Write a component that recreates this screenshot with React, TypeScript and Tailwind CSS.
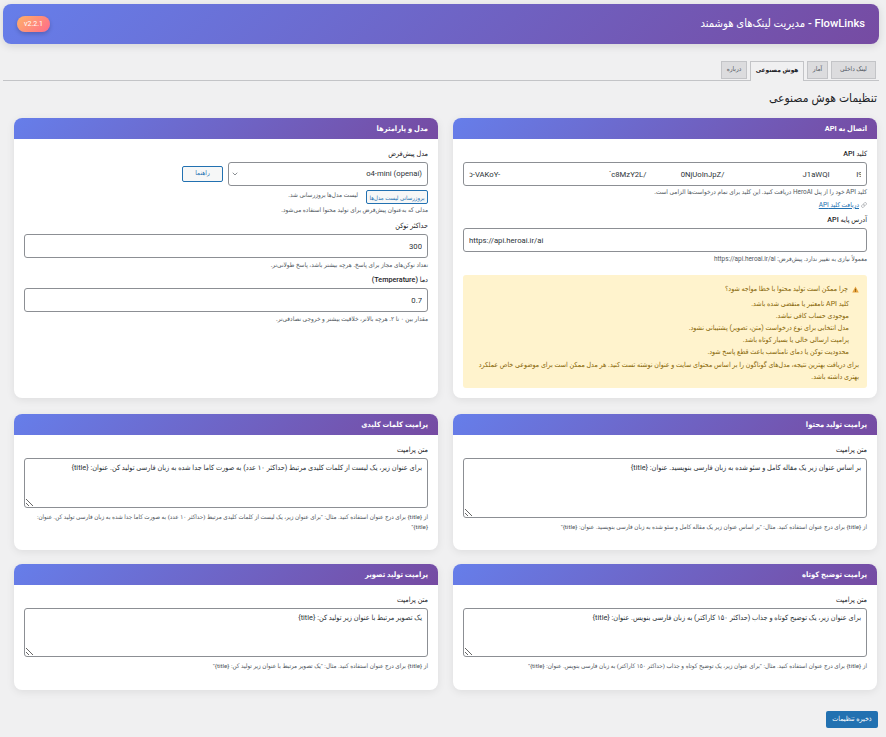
import React from 'react'
import { ChevronDown, Link } from 'lucide-react'

function Card({ title, children }: { title: string; children: React.ReactNode }) {
  return (
    <div className="bg-white rounded-lg shadow-[0_2px_8px_rgba(0,0,0,0.08)] overflow-hidden">
      <div className="h-[21px] flex items-center px-[10px] bg-[linear-gradient(135deg,#667eea,#764ba2)] text-white text-[7.5px] font-bold">{title}</div>
      <div className="px-[10px] pt-[10px] pb-[10px]">{children}</div>
    </div>
  )
}

function Label({ children }: { children: React.ReactNode }) {
  return <div className="text-[7.2px] leading-[12px] font-medium text-[#1d2327] mb-[1px] -translate-y-px">{children}</div>
}

function Help({ children, className = '' }: { children: React.ReactNode; className?: string }) {
  return <p className={'text-[6.4px] leading-[10px] text-[#50575e] ' + className}>{children}</p>
}

const inputCls = 'block w-full h-6 px-[5px] border border-[#8c8f94] rounded-[3px] bg-white text-[7.7px] text-[#2c3338] outline-none'
const tabCls = 'h-[18px] border border-[#c3c4c7] bg-[#dcdcde] text-[6.5px] text-[#50575e] flex items-center justify-center'

function PromptCard({ title, value, help, h, mb }: { title: string; value: string; help: string; h: string; mb: string }) {
  return (
    <Card title={title}>
      <Label>متن پرامپت</Label>
      <textarea readOnly value={value} className={'block w-full px-[5px] py-[3px] border border-[#8c8f94] rounded-[3px] bg-white text-[7.3px] leading-[12px] text-[#2c3338] outline-none ' + h} />
      <p className={'mt-[4px] text-[6.25px] leading-[10px] text-[#50575e] ' + mb}>{help}</p>
    </Card>
  )
}

export default function App() {
  return (
    <div dir="rtl" className="min-h-screen bg-[#f0f0f1] pt-1 font-['Roboto','DejaVu_Sans_Condensed','DejaVu_Sans',sans-serif]">
      <div className="ml-[3px] mr-[7px] h-10 rounded-lg bg-[linear-gradient(135deg,#667eea,#764ba2)] shadow-[0_2px_8px_rgba(0,0,0,0.12)] flex items-center justify-between px-[14px]">
        <h1 className="text-[11.2px] font-medium text-white">FlowLinks - مدیریت لینک‌های هوشمند</h1>
        <span className="h-4 w-[33px] rounded-full bg-[linear-gradient(135deg,#feb168,#ff6b8a)] text-white text-[7px] flex items-center justify-center shadow-[0_2px_4px_rgba(0,0,0,0.2)]">v2.2.1</span>
      </div>

      <div className="ml-[3px] mr-[7px] mt-[17px] h-5 border-b border-[#c3c4c7] flex items-start gap-[3px] pr-[3px]">
        <div className={tabCls + ' w-[45px]'}>لینک داخلی</div>
        <div className={tabCls + ' w-[21px]'}>آمار</div>
        <div className="h-5 w-[54px] border border-[#c3c4c7] border-b-0 bg-[#f0f0f1] text-[6.5px] font-bold text-[#1d2327] flex items-center justify-center pb-[2px]">هوش مصنوعی</div>
        <div className={tabCls + ' w-[26px]'}>درباره</div>
      </div>

      <div className="pr-[9px] pl-[14px]">
        <h2 className="mt-[7px] h-[20px] text-[12px] leading-[20px] font-medium text-[#1d2327]">تنظیمات هوش مصنوعی</h2>

        <div className="mt-[10px] grid grid-cols-2 gap-x-[15px]">
          <Card title="اتصال به API">
            <Label>کلید API</Label>
            <input readOnly dir="ltr" value={'ɔ-VAKoY-                                                         `c8MzY2L/                  0NjUoInJpZ/                                         J1aWQI              I9'} className={inputCls} />
            <Help className="mt-[1px]">کلید API خود را از پنل HeroAI دریافت کنید. این کلید برای تمام درخواست‌ها الزامی است.</Help>
            <a className="mt-[3px] flex items-center gap-[2px] text-[6.5px] leading-[10px] text-[#2271b1] underline"><Link size={6} className="text-[#787c82]" />دریافت کلید API</a>
            <div className="mt-[5px]"><Label>آدرس پایه API</Label></div>
            <input readOnly dir="ltr" value="https://api.heroai.ir/ai" className={inputCls} />
            <Help className="mt-[2px]">معمولاً نیازی به تغییر ندارد. پیش‌فرض: https://api.heroai.ir/ai</Help>
            <div className="mt-[11px] h-[113px] rounded-[3px] bg-[#fff3cd] pr-2 pl-1 pt-2 text-[7px] leading-[12px] text-[#856404]">
              <div className="flex items-center gap-1 font-medium">
                <svg width="7" height="7" viewBox="0 0 16 16"><path d="M8 1 15.5 15H.5z" fill="#e8a33d" /><path d="M7.2 6h1.6v5H7.2zM7.2 12h1.6v1.6H7.2z" fill="#5b3b08" /></svg>
                چرا ممکن است تولید محتوا با خطا مواجه شود؟
              </div>
              <ul className="pr-[10px] mt-[3px]">
                <li>کلید API نامعتبر یا منقضی شده باشد.</li>
                <li>موجودی حساب کافی نباشد.</li>
                <li>مدل انتخابی برای نوع درخواست (متن، تصویر) پشتیبانی نشود.</li>
                <li>پرامپت ارسالی خالی یا بسیار کوتاه باشد.</li>
                <li>محدودیت توکن یا دمای نامناسب باعث قطع پاسخ شود.</li>
              </ul>
              <p className="mt-[1px]">برای دریافت بهترین نتیجه، مدل‌های گوناگون را بر اساس محتوای سایت و عنوان نوشته تست کنید. هر مدل ممکن است برای موضوعی خاص عملکرد بهتری داشته باشد.</p>
            </div>
          </Card>

          <Card title="مدل و پارامترها">
            <Label>مدل پیش‌فرض</Label>
            <div className="flex items-center gap-[5px]">
              <div className="relative w-[200px]">
                <select className="appearance-none block w-full h-6 px-[5px] border border-[#8c8f94] rounded-[3px] bg-white text-[7.7px] text-[#2c3338] outline-none">
                  <option>o4-mini (openai)</option>
                </select>
                <ChevronDown size={8} className="absolute left-[3px] top-2 text-[#50575e]" />
              </div>
              <button className="w-[41px] h-4 border border-[#2271b1] rounded-[2px] bg-[#f6f7f7] text-[6.5px] text-[#2271b1]">راهنما</button>
            </div>
            <div className="mt-[4px] flex items-center gap-2">
              <button className="w-[62px] h-[14px] border border-[#2271b1] rounded-[2px] bg-[#f6f7f7] text-[6px] text-[#2271b1] whitespace-nowrap">بروزرسانی لیست مدل‌ها</button>
              <Help className="-mt-[4px]">لیست مدل‌ها بروزرسانی شد.</Help>
            </div>
            <Help className="mt-[1px]">مدلی که به‌عنوان پیش‌فرض برای تولید محتوا استفاده می‌شود.</Help>
            <div className="mt-[6px]"><Label>حداکثر توکن</Label></div>
            <input readOnly value="300" className={inputCls} />
            <Help className="mt-[2px]">تعداد توکن‌های مجاز برای پاسخ. هرچه بیشتر باشد، پاسخ طولانی‌تر.</Help>
            <div className="mt-[5px]"><Label>دما (Temperature)</Label></div>
            <input readOnly value="0.7" className={inputCls} />
            <Help className="mt-[2px]">مقدار بین ۰ تا ۲. هرچه بالاتر، خلاقیت بیشتر و خروجی تصادفی‌تر.</Help>
          </Card>
        </div>

        <div className="mt-4 grid grid-cols-2 gap-x-[15px]">
          <PromptCard
            title="پرامپت تولید محتوا"
            h="h-[60px]"
            mb="mb-[8px]"
            value="بر اساس عنوان زیر یک مقاله کامل و سئو شده به زبان فارسی بنویسید. عنوان: {title}"
            help={'از {title} برای درج عنوان استفاده کنید. مثال: "بر اساس عنوان زیر یک مقاله کامل و سئو شده به زبان فارسی بنویسید. عنوان: {title}"'}
          />
          <PromptCard
            title="پرامپت کلمات کلیدی"
            h="h-[50px]"
            mb="mb-0"
            value="برای عنوان زیر، یک لیست از کلمات کلیدی مرتبط (حداکثر ۱۰ عدد) به صورت کاما جدا شده به زبان فارسی تولید کن. عنوان: {title}"
            help={'از {title} برای درج عنوان استفاده کنید. مثال: "برای عنوان زیر، یک لیست از کلمات کلیدی مرتبط (حداکثر ۱۰ عدد) به صورت کاما جدا شده به زبان فارسی تولید کن. عنوان: {title}"'}
          />
        </div>

        <div className="mt-[14px] grid grid-cols-2 gap-x-[15px]">
          <PromptCard
            title="پرامپت توضیح کوتاه"
            h="h-[49px]"
            mb="mb-[9px]"
            value="برای عنوان زیر، یک توضیح کوتاه و جذاب (حداکثر ۱۵۰ کاراکتر) به زبان فارسی بنویس. عنوان: {title}"
            help={'از {title} برای درج عنوان استفاده کنید. مثال: "برای عنوان زیر، یک توضیح کوتاه و جذاب (حداکثر ۱۵۰ کاراکتر) به زبان فارسی بنویس. عنوان: {title}"'}
          />
          <PromptCard
            title="پرامپت تولید تصویر"
            h="h-[49px]"
            mb="mb-[9px]"
            value="یک تصویر مرتبط با عنوان زیر تولید کن: {title}"
            help={'از {title} برای درج عنوان استفاده کنید. مثال: "یک تصویر مرتبط با عنوان زیر تولید کن: {title}"'}
          />
        </div>

        <div className="mt-[21px] flex">
          <button className="w-[52px] h-[17px] rounded-[2px] bg-[#2271b1] text-white text-[7px] font-medium -mr-px whitespace-nowrap">ذخیره تنظیمات</button>
        </div>
      </div>
    </div>
  )
}
